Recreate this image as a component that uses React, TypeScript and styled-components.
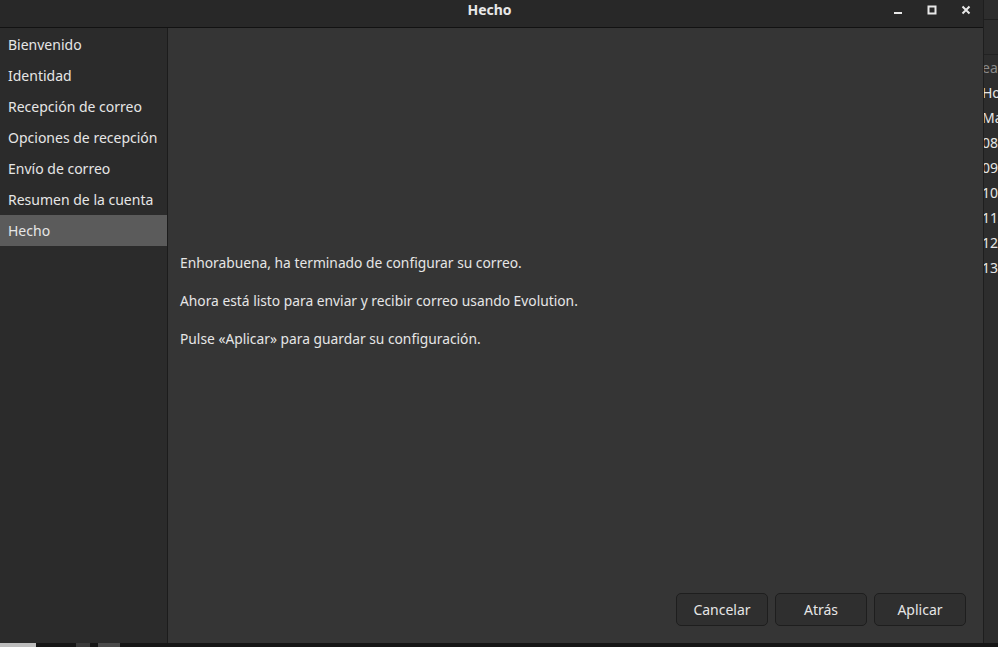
import React from 'react';
import styled, { createGlobalStyle } from 'styled-components';

const GlobalStyle = createGlobalStyle`
  html, body {
    margin: 0;
    padding: 0;
    background: #1c1c1c;
    overflow: hidden;
  }
  body {
    font-family: "Noto Sans", "DejaVu Sans", sans-serif;
    color: #eeeeec;
  }
`;

const Desktop = styled.div`
  position: relative;
  width: 998px;
  height: 647px;
  background: #1a1a1a;
  overflow: hidden;
`;

/* window partly hidden behind the dialog */
const BackWindow = styled.div`
  position: absolute;
  left: 960px;
  top: 0;
  width: 120px;
  height: 643px;
  background: #2d2d2d;
  border-left: 1px solid #1e1e1e;
`;

const BackHeader = styled.div`
  height: 18px;
  border-bottom: 1px solid #1f1f1f;
  margin-top: 1px;
`;

const BackToolbar = styled.div`
  height: 34px;
  border-bottom: 1px solid #222;
`;

const BackRow = styled.div<{ $dim?: boolean }>`
  height: 25px;
  line-height: 25px;
  padding-left: 21px;
  font-size: 14px;
  color: ${(p) => (p.$dim ? '#8a8a8a' : '#e6e6e6')};
  white-space: nowrap;
`;

const DockStrip = styled.div`
  position: absolute;
  left: 0;
  bottom: 0;
  width: 998px;
  height: 4px;
  display: flex;
  background: #161616;
`;

const DockBit = styled.div<{ $w: number; $c: string; $ml?: number }>`
  width: ${(p) => p.$w}px;
  margin-left: ${(p) => p.$ml ?? 0}px;
  background: ${(p) => p.$c};
`;

const Window = styled.div`
  position: relative;
  width: 984px;
  height: 643px;
  display: flex;
  flex-direction: column;
  background: #353535;
  border-right: 1px solid #1e1e1e;
  box-sizing: border-box;
`;

const TitleBar = styled.div`
  height: 27px;
  flex: none;
  display: flex;
  align-items: flex-start;
  justify-content: center;
  position: relative;
  background: #282828;
  border-bottom: 1px solid #121212;
`;

const Title = styled.div`
  font-size: 14px;
  line-height: 20px;
  font-weight: bold;
  color: #e8e8e8;
  margin-right: 4px;
`;

const Controls = styled.div`
  position: absolute;
  right: 0;
  top: 0;
  height: 20px;
  display: flex;
  align-items: center;
`;

const CtrlButton = styled.div`
  width: 34px;
  height: 20px;
  display: flex;
  align-items: center;
  justify-content: center;
`;

const Body = styled.div`
  flex: 1;
  display: flex;
  min-height: 0;
`;

const Sidebar = styled.div`
  width: 167px;
  flex: none;
  background: #2b2b2b;
  border-right: 1px solid #1c1c1c;
  padding-top: 1px;
`;

const SideItem = styled.div<{ $active?: boolean }>`
  height: 31px;
  line-height: 31px;
  padding-left: 8px;
  font-size: 14px;
  color: #e6e6e6;
  background: ${(p) => (p.$active ? '#5b5b5b' : 'transparent')};
  white-space: nowrap;
`;

const Content = styled.div`
  flex: 1;
  display: flex;
  flex-direction: column;
  padding: 0 17px 17px 12px;
`;

const Messages = styled.div`
  flex: 1;
  display: flex;
  flex-direction: column;
  justify-content: center;
  gap: 18px;
  padding-bottom: 20px;
`;

const Message = styled.p`
  margin: 0;
  font-size: 13.8px;
  line-height: 20px;
  color: #e6e6e6;
`;

const ButtonRow = styled.div`
  display: flex;
  justify-content: flex-end;
  gap: 7px;
`;

const Button = styled.button`
  width: 92px;
  height: 33px;
  border-radius: 5px;
  border: 1px solid #1e1e1e;
  background: #2f2f2f;
  color: #e6e6e6;
  font-family: "Noto Sans", sans-serif;
  font-size: 14px;
  padding: 0;
`;

const backRows: { t: string; dim?: boolean }[] = [
  { t: 'ear', dim: true },
  { t: 'Hoy' },
  { t: 'Mañ' },
  { t: '08/' },
  { t: '09/' },
  { t: '10/' },
  { t: '11/' },
  { t: '12/' },
  { t: '13/' },
];

const steps = [
  'Bienvenido',
  'Identidad',
  'Recepción de correo',
  'Opciones de recepción',
  'Envío de correo',
  'Resumen de la cuenta',
  'Hecho',
];

export default function App() {
  return (
    <>
      <GlobalStyle />
      <Desktop>
        <BackWindow>
          <BackHeader />
          <BackToolbar />
          {backRows.map((r) => (
            <BackRow key={r.t} $dim={r.dim}>
              {r.t}
            </BackRow>
          ))}
        </BackWindow>
        <DockStrip>
          <DockBit $w={36} $c="#bdbdbd" />
          <DockBit $w={14} $c="#3a3a3a" $ml={40} />
          <DockBit $w={22} $c="#4a4a4a" $ml={8} />
        </DockStrip>
        <Window>
          <TitleBar>
            <Title>Hecho</Title>
            <Controls>
              <CtrlButton>
                <svg width="10" height="10" viewBox="0 0 10 10">
                  <rect x="1" y="7" width="8" height="2" fill="#e8e8e8" />
                </svg>
              </CtrlButton>
              <CtrlButton>
                <svg width="10" height="10" viewBox="0 0 10 10">
                  <rect x="1.5" y="1.5" width="7" height="7" fill="none" stroke="#e8e8e8" strokeWidth="2" />
                </svg>
              </CtrlButton>
              <CtrlButton>
                <svg width="10" height="10" viewBox="0 0 10 10">
                  <path d="M1.5 1.5 L8.5 8.5 M8.5 1.5 L1.5 8.5" stroke="#e8e8e8" strokeWidth="2" />
                </svg>
              </CtrlButton>
            </Controls>
          </TitleBar>
          <Body>
            <Sidebar>
              {steps.map((s) => (
                <SideItem key={s} $active={s === 'Hecho'}>
                  {s}
                </SideItem>
              ))}
            </Sidebar>
            <Content>
              <Messages>
                <Message>Enhorabuena, ha terminado de configurar su correo.</Message>
                <Message>Ahora está listo para enviar y recibir correo usando Evolution.</Message>
                <Message>Pulse «Aplicar» para guardar su configuración.</Message>
              </Messages>
              <ButtonRow>
                <Button>Cancelar</Button>
                <Button>Atrás</Button>
                <Button>Aplicar</Button>
              </ButtonRow>
            </Content>
          </Body>
        </Window>
      </Desktop>
    </>
  );
}
